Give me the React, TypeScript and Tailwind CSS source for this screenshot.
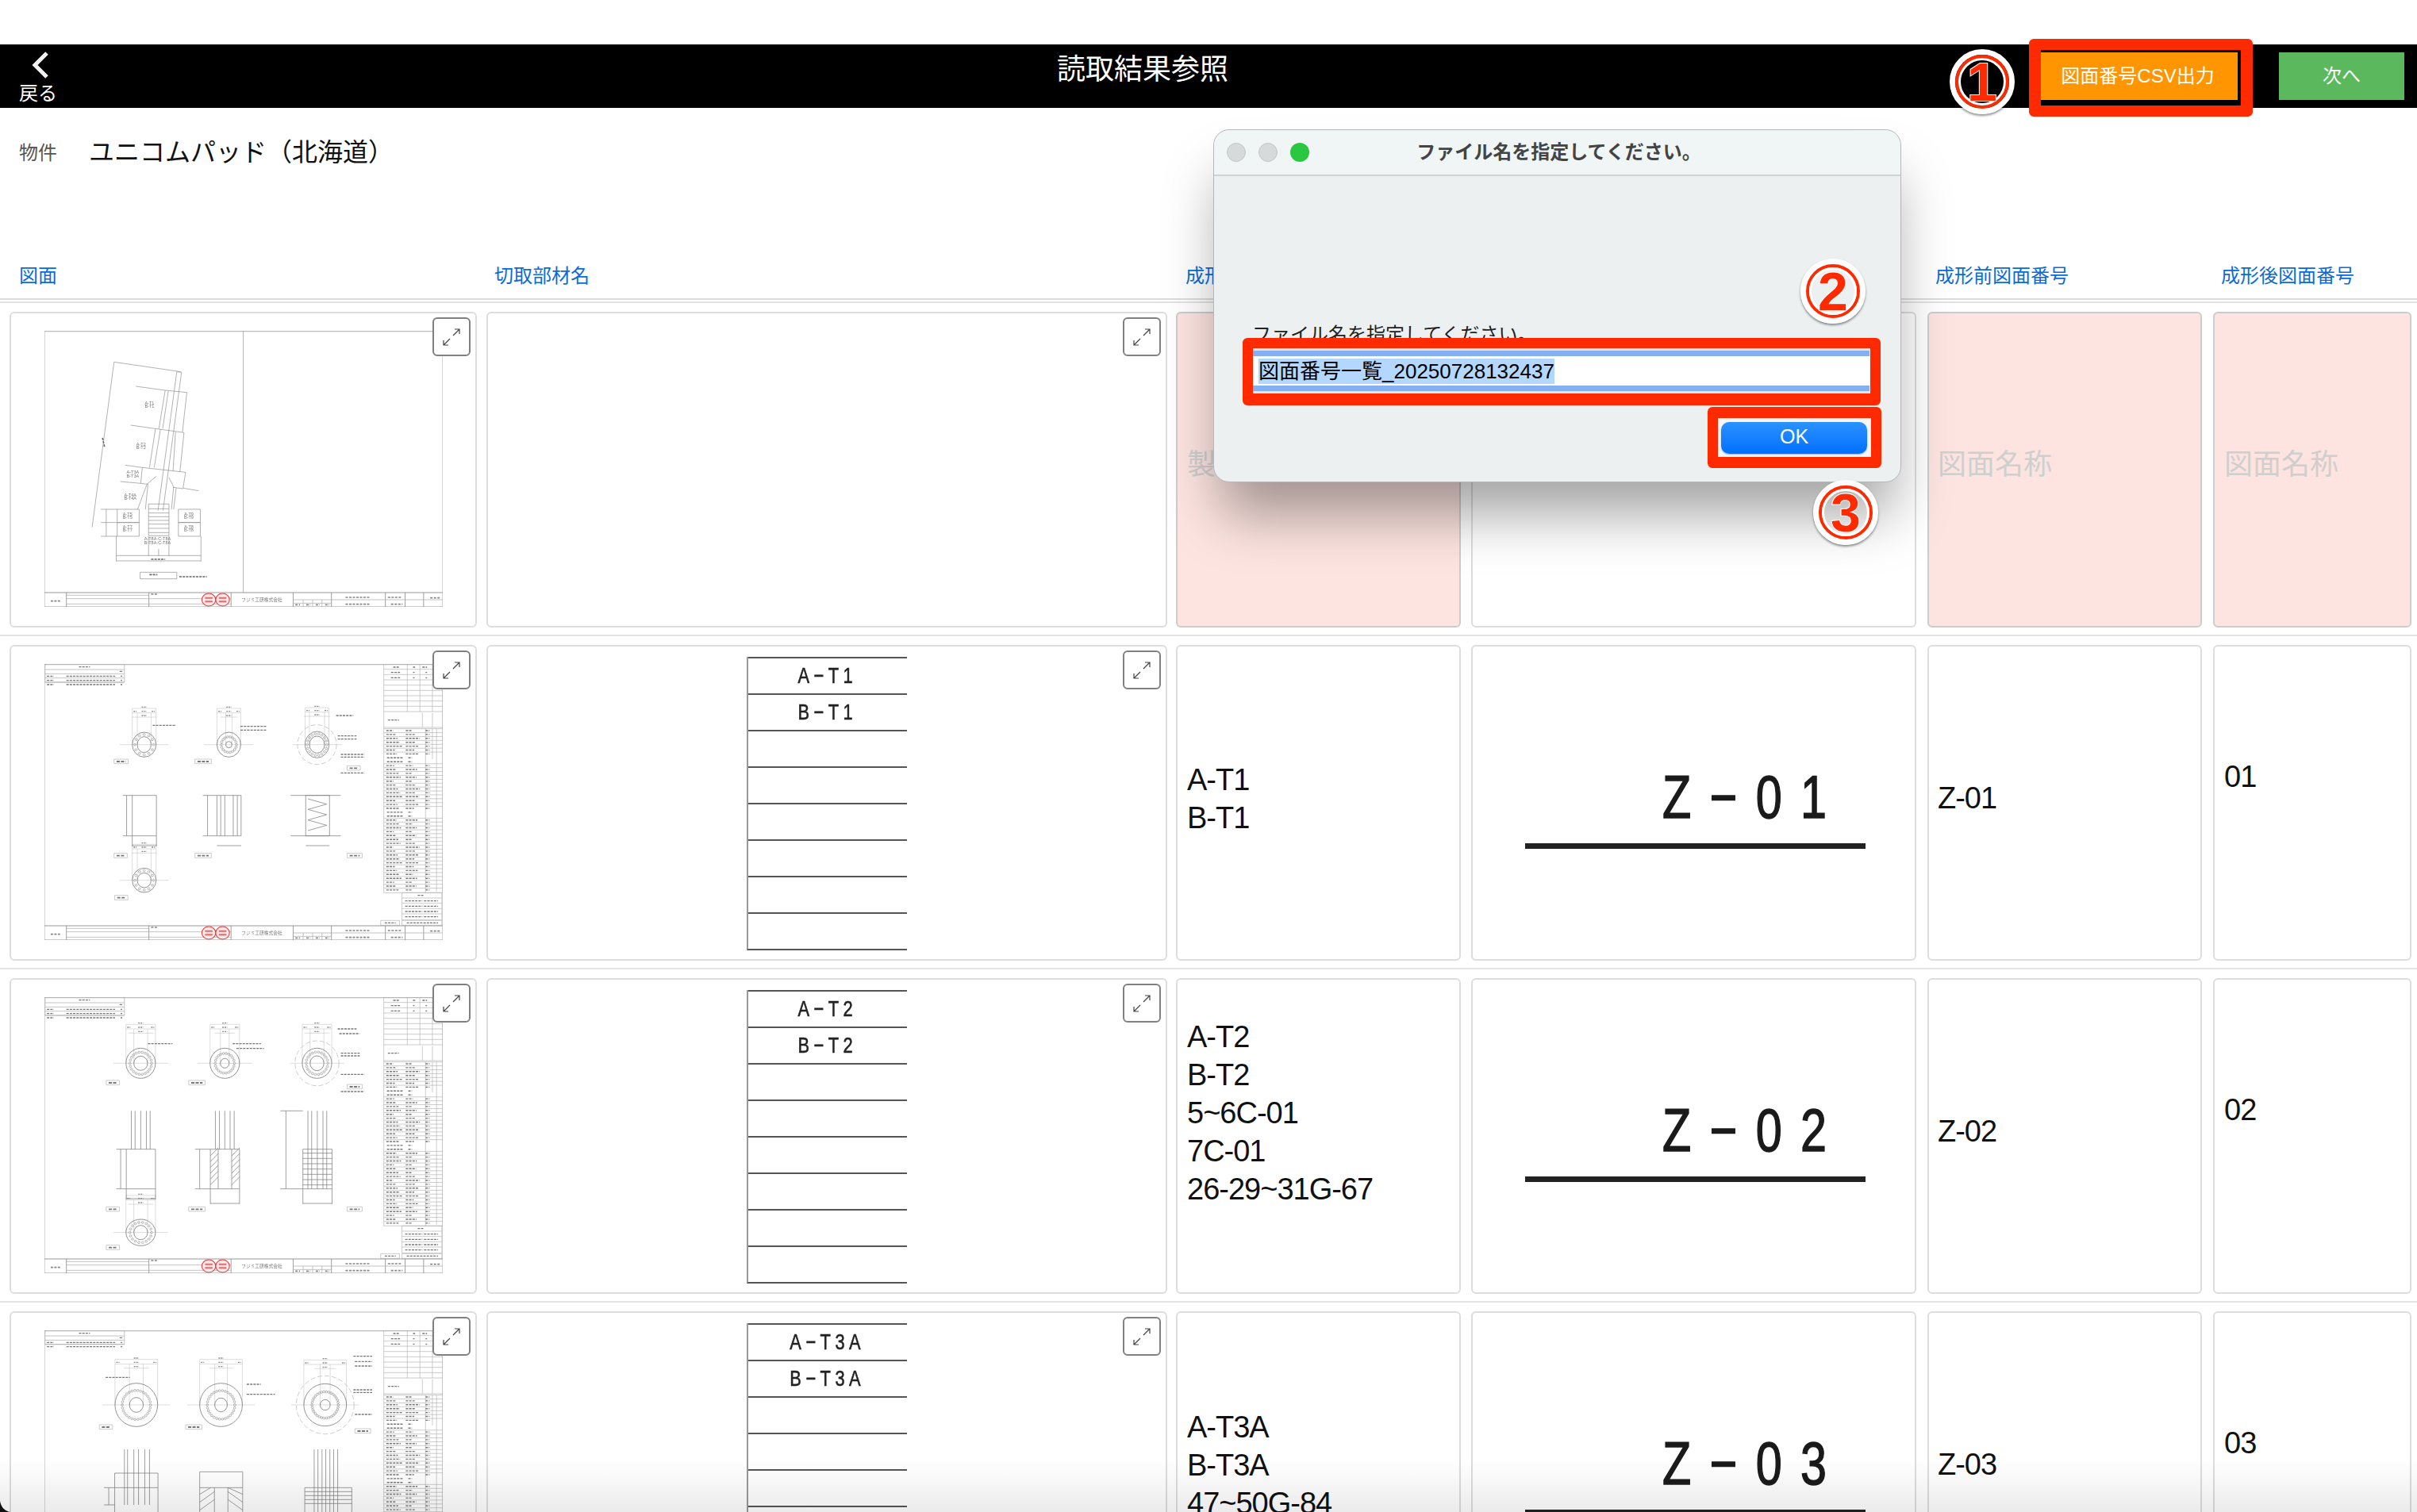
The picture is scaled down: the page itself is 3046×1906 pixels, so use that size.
import React from 'react';

const FONT = "[font-family:'Liberation_Sans','Noto_Sans_CJK_JP',sans-serif]";

// Drawing thumbnails: coordinates are in reference-zoom units, so the viewBox is stretched on purpose
const hLine = (x1: number, x2: number, y: number) => `M${x1} ${y}H${x2}`;
const vLine = (x: number, y1: number, y2: number) => `M${x} ${y1}V${y2}`;
const seg = (x1: number, y1: number, x2: number, y2: number) => `M${x1} ${y1}L${x2} ${y2}`;
const box = (x1: number, y1: number, x2: number, y2: number) => `M${x1} ${y1}H${x2}V${y2}H${x1}Z`;

function TitleBlock() {
  const thin = [
    hLine(70, 333, 1000), hLine(70, 595, 1013), hLine(70, 595, 1033),
    hLine(793, 1270, 1017), hLine(793, 915, 1030),
    vLine(825, 1017, 1044), vLine(855, 1017, 1044), vLine(885, 1017, 1044),
  ].join('');
  const thick = [70, 333, 595, 793, 915, 1087, 1150, 1209].map((x) => vLine(x, 990, 1044)).join('');
  const ink = [
    hLine(20, 50, 1022), hLine(340, 362, 996), hLine(960, 1040, 1008), hLine(960, 1040, 1034),
    hLine(1095, 1140, 1008), hLine(1105, 1142, 1034), hLine(1230, 1262, 1010),
    hLine(800, 815, 1036), hLine(835, 848, 1036), hLine(865, 878, 1036), hLine(895, 908, 1036),
  ].join('');
  return (
    <g>
      <path d={hLine(0, 1270, 990)} stroke="#999" strokeWidth="1.2" />
      <path d={hLine(0, 1270, 1044)} stroke="#999" strokeWidth="1" />
      <path d={thick} stroke="#888" strokeWidth="0.8" />
      <path d={thin} stroke="#aaa" strokeWidth="0.7" />
      <path d={ink} stroke="#888" strokeWidth="1.6" strokeDasharray="3 1.5" />
      <ellipse cx="524" cy="1017" rx="22" ry="24" fill="#fbe9e9" stroke="#e23a3a" strokeWidth="1.1" />
      <ellipse cx="568" cy="1017" rx="22" ry="24" fill="#fbe9e9" stroke="#e23a3a" strokeWidth="1.1" />
      <path d={hLine(512, 536, 1010) + hLine(512, 536, 1024) + hLine(556, 580, 1010) + hLine(556, 580, 1024)} stroke="#e66" strokeWidth="2" />
      <text x="628" y="1023" fontSize="17" fill="#777" textLength="130" lengthAdjust="spacingAndGlyphs" fontFamily="'Noto Sans CJK JP',sans-serif">フジミ工研株式会社</text>
    </g>
  );
}

function SideTable() {
  const grid: string[] = [box(1082, 0, 1270, 865), hLine(1082, 1270, 180), hLine(1082, 1270, 240)];
  const ink: string[] = [];
  for (let i = 1; i < 9; i++) grid.push(hLine(1082, 1270, i * 20));
  [1157, 1197, 1237].forEach((x) => grid.push(vLine(x, 0, 180)));
  grid.push(vLine(1205, 185, 240), vLine(1237, 185, 240));
  ink.push(hLine(1112, 1130, 12), hLine(1175, 1182, 12), hLine(1205, 1220, 12), hLine(1105, 1135, 32), hLine(1105, 1135, 52), hLine(1175, 1180, 32), hLine(1215, 1220, 32), hLine(1175, 1180, 52), hLine(1215, 1220, 52), hLine(1095, 1130, 212));
  let y = 245;
  for (let i = 0; i < 42; i++) {
    const gap = i === 7 || i === 8 || i === 21 || i === 22;
    if (!gap) {
      grid.push(hLine(1082, 1270, y));
      const w = 22 + ((i * 37) % 30);
      ink.push(hLine(1090, 1090 + w, y + 7), hLine(1152, 1152 + 18 + ((i * 13) % 28), y + 7), hLine(1215, 1228, y + 7));
    } else {
      ink.push(hLine(1092, 1142, y + 7), hLine(1160, 1172, y + 7));
    }
    y += 14.7;
  }
  grid.push(vLine(1215, 245, 865), vLine(1237, 245, 360), vLine(1250, 245, 860));
  grid.push(box(1140, 865, 1267, 968), box(1072, 970, 1132, 988), box(1140, 970, 1267, 988));
  [885, 905, 925, 945].forEach((ly) => {
    grid.push(hLine(1140, 1267, ly));
    ink.push(hLine(1150, 1205, ly + 11), hLine(1210, 1255, ly + 11));
  });
  ink.push(hLine(1085, 1120, 979), hLine(1155, 1255, 979), hLine(1190, 1210, 875));
  return (
    <g>
      <path d={grid.join('')} stroke="#aaa" strokeWidth="0.6" />
      <path d={ink.join('')} stroke="#777" strokeWidth="1.4" strokeDasharray="3 1.2" />
    </g>
  );
}

type Ring = { cx: number; cy: number; rx: number; ry: number; irx: number; iry: number; outer?: [number, number]; dots: number };

function PileRing({ r }: { r: Ring }) {
  const dots = [];
  const mx = (r.rx + r.irx) / 2;
  const my = (r.ry + r.iry) / 2;
  for (let i = 0; i < r.dots; i++) {
    const a = (i / r.dots) * Math.PI * 2;
    dots.push(<ellipse key={i} cx={r.cx + Math.cos(a) * mx} cy={r.cy + Math.sin(a) * my} rx="3.5" ry="4" stroke="#888" strokeWidth="0.6" />);
  }
  const top = r.cy - r.ry - 90;
  const d = [
    hLine(r.cx - r.rx, r.cx + r.rx, top), hLine(r.cx - r.rx, r.cx + r.rx, top + 17), hLine(r.cx - r.irx - 18, r.cx + r.irx + 18, top + 33),
    vLine(r.cx - r.rx, top, r.cy), vLine(r.cx + r.rx, top, r.cy), vLine(r.cx - r.irx, top + 17, r.cy), vLine(r.cx + r.irx, top + 17, r.cy),
    hLine(r.cx - r.rx - 40, r.cx + r.rx + 40, r.cy),
  ].join('');
  const ink = [hLine(r.cx - 8, r.cx + 8, top - 5), hLine(r.cx - 8, r.cx + 8, top + 11), hLine(r.cx - 8, r.cx + 8, top + 27), hLine(r.cx - r.rx + 4, r.cx - r.rx + 14, top + 11), hLine(r.cx + r.rx - 14, r.cx + r.rx - 4, top + 11)].join('');
  return (
    <g>
      {r.outer && <ellipse cx={r.cx} cy={r.cy} rx={r.outer[0]} ry={r.outer[1]} stroke="#aaa" strokeWidth="0.6" strokeDasharray="6 3" />}
      <path d={d} stroke="#bbb" strokeWidth="0.5" />
      <path d={ink} stroke="#888" strokeWidth="1.4" strokeDasharray="2 1" />
      <ellipse cx={r.cx} cy={r.cy} rx={r.rx} ry={r.ry} stroke="#777" strokeWidth="0.8" />
      <ellipse cx={r.cx} cy={r.cy} rx={r.irx} ry={r.iry} stroke="#777" strokeWidth="0.8" />
      {dots}
    </g>
  );
}

function Tag({ x, y, w }: { x: number; y: number; w: number }) {
  return (
    <g>
      <rect x={x} y={y} width={w} height="17" stroke="#aaa" strokeWidth="0.6" />
      <path d={hLine(x + 8, x + w - 8, y + 9)} stroke="#777" strokeWidth="1.8" strokeDasharray="4 1.5" />
    </g>
  );
}

function Sheet({ children, rowOne }: { children: React.ReactNode; rowOne?: boolean }) {
  return (
    <svg viewBox="0 0 1270 1044" preserveAspectRatio="none" fill="none" className="h-[348px] w-[502px] blur-[0.3px] [&_*]:[vector-effect:non-scaling-stroke]">
      <path d={hLine(0, 1270, 0)} stroke="#bbb" strokeWidth="2.4" />
      <path d={vLine(0, 0, 1044) + vLine(1270, 0, 1044)} stroke="#aaa" strokeWidth="1" />
      {rowOne && <path d={vLine(634, 0, 990)} stroke="#aaa" strokeWidth="0.9" />}
      {children}
      <TitleBlock />
    </svg>
  );
}

function Legend({ rows }: { rows: number }) {
  const h = 21 + rows * 16;
  const lines = [box(2, 0, 255, h), hLine(2, 255, 21)];
  const ink = [hLine(110, 145, 11), hLine(240, 250, 28)];
  for (let i = 0; i < rows; i++) {
    lines.push(hLine(2, 255, 37 + i * 16));
    ink.push(hLine(8, 30, 46 + i * 16), hLine(70, 225, 46 + i * 16), hLine(243, 248, 46 + i * 16));
  }
  return (
    <g>
      <path d={lines.join('')} stroke="#aaa" strokeWidth="0.7" />
      <path d={ink.join('')} stroke="#777" strokeWidth="1.4" strokeDasharray="3 1.2" />
    </g>
  );
}

function ElevationDrawing() {
  const body = [
    seg(222, 118, 435, 155), seg(222, 118, 152, 743), seg(292, 210, 385, 225), seg(275, 357, 354, 370), seg(257, 508, 312, 517), seg(242, 570, 307, 577), seg(442, 595, 492, 605),
    seg(422, 155, 437, 157), seg(422, 155, 362, 680), seg(437, 157, 378, 680),
    seg(385, 225, 454, 233), seg(385, 225, 365, 370), seg(454, 233, 440, 383), seg(395, 227, 377, 370),
    seg(354, 370, 445, 385), seg(354, 370, 335, 517), seg(445, 385, 432, 533), seg(370, 372, 350, 517), seg(418, 382, 410, 530),
    seg(312, 517, 450, 535), seg(312, 517, 307, 577), seg(450, 535, 442, 595),
    seg(357, 550, 327, 580), seg(327, 580, 297, 675), seg(397, 555, 412, 590), seg(412, 590, 405, 675),
    seg(307, 577, 330, 580), seg(410, 592, 442, 597), seg(420, 595, 412, 675), seg(330, 580, 322, 675),
    box(232, 675, 302, 725), box(232, 725, 302, 777), box(427, 675, 497, 725), box(427, 725, 497, 777),
    box(332, 655, 397, 775),
    hLine(332, 397, 673), hLine(332, 397, 689), hLine(332, 397, 703), hLine(332, 397, 717), hLine(332, 397, 731), hLine(332, 397, 747), hLine(332, 397, 763),
    hLine(180, 232, 675), hLine(180, 232, 725), hLine(180, 232, 777), vLine(197, 675, 777),
    hLine(229, 499, 850), hLine(229, 499, 870), vLine(229, 777, 872), vLine(499, 777, 872), vLine(332, 777, 852), vLine(397, 777, 852), vLine(364, 825, 852),
    box(305, 913, 422, 938),
  ].join('');
  const ink = [seg(185, 405, 192, 440), hLine(335, 360, 922), hLine(430, 518, 930), hLine(340, 385, 864)].join('');
  const labels: [string, number, number][] = [
    ['A-T1', 320, 278], ['B-T1', 320, 290], ['A-T2', 293, 434], ['B-T2', 293, 447], ['A-T3A', 262, 541], ['B-T3A', 262, 554],
    ['A-T4A', 254, 628], ['B-T4A', 254, 640], ['A-T5', 250, 698], ['B-T5', 250, 710], ['A-T9', 445, 698], ['B-T9', 445, 710],
    ['A-T7', 250, 748], ['B-T7', 250, 760], ['A-T8', 445, 748], ['B-T8', 445, 760], ['A-T8A·C-T8A', 318, 793], ['B-T8A·C-T8A', 318, 806],
  ];
  return (
    <Sheet rowOne>
      <path d={body} stroke="#888" strokeWidth="0.65" />
      <path d={ink} stroke="#666" strokeWidth="1.6" strokeDasharray="3 1.2" />
      {labels.map(([t, x, y]) => (
        <text key={t} x={x} y={y} fontSize="14" fill="#777" fontFamily="'Liberation Sans',sans-serif">{t}</text>
      ))}
    </Sheet>
  );
}

function hatch(x1: number, x2: number, y1: number, y2: number, step: number) {
  const out: string[] = [];
  for (let y = y1; y < y2 - 20; y += step) out.push(seg(x1, y + 30, x2, y));
  return out.join('');
}

function PileDrawing({ variant }: { variant: 1 | 2 | 3 }) {
  const rings: Ring[] =
    variant === 1
      ? [
          { cx: 318, cy: 305, rx: 38, ry: 47, irx: 22, iry: 30, dots: 12 },
          { cx: 588, cy: 305, rx: 38, ry: 47, irx: 10, iry: 12, dots: 18 },
          { cx: 869, cy: 305, rx: 38, ry: 50, irx: 24, iry: 32, outer: [62, 75], dots: 18 },
          { cx: 318, cy: 818, rx: 38, ry: 46, irx: 22, iry: 28, dots: 12 },
        ]
      : variant === 2
        ? [
            { cx: 307, cy: 250, rx: 47, ry: 57, irx: 22, iry: 27, dots: 22 },
            { cx: 575, cy: 250, rx: 47, ry: 57, irx: 14, iry: 18, dots: 22 },
            { cx: 869, cy: 250, rx: 47, ry: 57, irx: 22, iry: 28, outer: [70, 85], dots: 22 },
            { cx: 307, cy: 890, rx: 47, ry: 50, irx: 22, iry: 27, dots: 18 },
          ]
        : [
            { cx: 293, cy: 282, rx: 68, ry: 82, irx: 22, iry: 28, dots: 30 },
            { cx: 563, cy: 282, rx: 68, ry: 82, irx: 20, iry: 26, dots: 30 },
            { cx: 895, cy: 282, rx: 68, ry: 80, irx: 16, iry: 20, outer: [92, 110], dots: 34 },
          ];
  const bodies =
    variant === 1
      ? [
          box(280, 497, 357, 650), box(550, 497, 627, 650), vLine(562, 497, 650), vLine(575, 497, 650), vLine(602, 497, 650), vLine(615, 497, 650),
          box(833, 497, 909, 650), hLine(785, 945, 497), hLine(785, 945, 650),
          hLine(250, 280, 497), hLine(250, 280, 650), vLine(262, 497, 650), hLine(280, 357, 687), vLine(280, 650, 690), vLine(357, 650, 690),
          hLine(505, 550, 497), hLine(505, 550, 650), vLine(520, 497, 650), hLine(550, 627, 687),
          hLine(833, 909, 687),
          seg(840, 510, 900, 530), seg(900, 530, 840, 550), seg(840, 550, 900, 570), seg(900, 570, 840, 590), seg(840, 590, 900, 610), seg(900, 610, 840, 630),
        ]
      : variant === 2
        ? [
            box(261, 575, 354, 725), box(529, 575, 622, 725), vLine(554, 575, 725), vLine(597, 575, 725),
            box(824, 575, 917, 725), hLine(229, 261, 575), hLine(229, 261, 725), vLine(243, 575, 725),
            hLine(480, 529, 575), hLine(480, 529, 725), vLine(495, 575, 725), hLine(261, 354, 762), vLine(261, 725, 765), vLine(354, 725, 765),
            hLine(529, 622, 780), vLine(529, 725, 782), vLine(622, 725, 782), hLine(824, 917, 780), vLine(824, 725, 782), vLine(917, 725, 782),
            ...[277, 289, 307, 325, 337].map((x) => vLine(x, 430, 575)), ...[545, 558, 575, 592, 605].map((x) => vLine(x, 430, 575)),
            ...[840, 852, 870, 888, 900].map((x) => vLine(x, 430, 725)),
            ...[590, 610, 630, 650, 670, 690, 710].map((y) => hLine(824, 917, y)), hLine(752, 824, 430), vLine(770, 430, 725), hLine(752, 824, 725),
            hatch(529, 554, 570, 720, 22), hatch(597, 622, 570, 720, 22),
          ]
        : [
            box(224, 595, 362, 700), box(495, 595, 632, 700), vLine(542, 595, 700), vLine(585, 595, 700), box(830, 595, 980, 700),
            hLine(190, 224, 595), hLine(190, 224, 660), vLine(205, 595, 660),
            ...[255, 265, 285, 300, 320, 335].map((x) => vLine(x, 450, 660)), ...[860, 872, 885, 897, 910, 922, 935].map((x) => vLine(x, 450, 700)),
            hLine(224, 362, 540), vLine(224, 540, 595), vLine(362, 540, 595), hLine(495, 632, 535), vLine(495, 535, 595), vLine(632, 535, 595),
            ...[610, 625, 640, 655].map((y) => hLine(830, 980, y)),
            seg(495, 620, 530, 595), seg(495, 650, 542, 610), seg(495, 680, 542, 640), seg(585, 610, 632, 650), seg(585, 640, 632, 680), seg(585, 595, 632, 620),
          ];
  const tags: [number, number, number][] =
    variant === 1
      ? [[222, 360, 45], [480, 360, 52], [965, 385, 42], [222, 716, 42], [480, 716, 52], [965, 716, 48], [224, 875, 42]]
      : variant === 2
        ? [[197, 315, 42], [460, 315, 52], [965, 330, 48], [197, 793, 42], [460, 793, 52], [965, 793, 48], [197, 938, 42]]
        : [[175, 357, 42], [450, 357, 52], [990, 372, 50]];
  const notes =
    variant === 1
      ? [hLine(345, 420, 232), hLine(625, 710, 236), hLine(625, 710, 250), hLine(930, 985, 195), hLine(935, 995, 272), hLine(935, 995, 284), hLine(945, 1020, 342), hLine(945, 1020, 352), hLine(945, 1020, 412)]
      : variant === 2
        ? [hLine(330, 408, 176), hLine(600, 690, 176), hLine(612, 700, 194), hLine(935, 995, 120), hLine(940, 1005, 138), hLine(945, 1005, 212), hLine(945, 1005, 222), hLine(945, 1020, 357), hLine(945, 1020, 292)]
        : [hLine(195, 272, 178), hLine(645, 690, 204), hLine(645, 735, 242), hLine(985, 1045, 98), hLine(990, 1045, 118), hLine(990, 1045, 135), hLine(985, 1045, 225), hLine(985, 1045, 235), hLine(990, 1045, 318)];
  const legendRows = variant === 3 ? 2 : 3;
  return (
    <Sheet>
      <Legend rows={legendRows} />
      <SideTable />
      {rings.map((r) => (
        <PileRing key={r.cx + '-' + r.cy} r={r} />
      ))}
      <path d={bodies.join('')} stroke="#777" strokeWidth="0.7" />
      <path d={notes.join('')} stroke="#777" strokeWidth="1.4" strokeDasharray="3 1.2" />
      {tags.map(([x, y, w]) => (
        <Tag key={x + '-' + y} x={x} y={y} w={w} />
      ))}
    </Sheet>
  );
}

function ExpandButton() {
  return (
    <button className="absolute right-[6px] top-[5px] flex h-[49px] w-[48px] items-center justify-center rounded-[6px] border-2 border-[#808080] bg-white">
      <svg width="24" height="24" viewBox="0 0 24 24" fill="none" stroke="#444" strokeWidth="1.2">
        <path d="M14 10 22 2M16 2h6v6M10 14 2 22M2 16v6h6" />
      </svg>
    </button>
  );
}

function PartsTable({ labels }: { labels: string[] }) {
  const rows = [...labels, ...Array(8 - labels.length).fill('')];
  return (
    <div className="ml-[326px] mt-[13px] w-[202px] border-b-2 border-l-2 border-b-[#555] border-l-[#999]">
      {rows.map((label, i) => (
        <div key={i} className="flex h-[46px] items-center justify-center border-t-2 border-[#555] text-[28px] leading-none tracking-[7px] text-[#222]">
          {label && <span className="inline-block scale-x-[0.78] [-webkit-text-stroke:0.6px_#222]">{label}</span>}
        </div>
      ))}
    </div>
  );
}

function DrawingNumber({ text }: { text: string }) {
  return (
    <div className="ml-[66px] mt-[152px] w-[429px]">
      <div className="ml-[173px] h-[76px] origin-left scale-x-[0.78] whitespace-nowrap text-[76px] leading-[76px] tracking-[30px] text-[#1a1a1a] [-webkit-text-stroke:1.5px_#1a1a1a]">{text}</div>
      <div className="mt-[20px] h-[7px] bg-[#222]" />
    </div>
  );
}

const CELL = 'relative h-[398px] rounded-[6px] border-2 border-[#dddddd] bg-white overflow-hidden';
const PINK = 'relative h-[398px] rounded-[6px] border-2 border-[#cccccc] bg-[#fde4e0] overflow-hidden';
const BODY = 'text-[38px] leading-[48px] tracking-[-1px] text-[#111]';
const HOLDER = 'text-[36px] leading-[48px] text-[#cfcfcf]';
const HEAD = 'text-[24px] leading-[30px] text-[#0a6cd6]';

const ROWS = [
  { drawing: <ElevationDrawing />, parts: [] as string[], names: [], pt: 'pt-[144px]', z: '', code: '', no: '' },
  { drawing: <PileDrawing variant={1} />, parts: ['A−T1', 'B−T1'], names: ['A-T1', 'B-T1'], pt: 'pt-[144px]', z: 'Z−01', code: 'Z-01', no: '01' },
  { drawing: <PileDrawing variant={2} />, parts: ['A−T2', 'B−T2'], names: ['A-T2', 'B-T2', '5~6C-01', '7C-01', '26-29~31G-67'], pt: 'pt-[48px]', z: 'Z−02', code: 'Z-02', no: '02' },
  { drawing: <PileDrawing variant={3} />, parts: ['A−T3A', 'B−T3A'], names: ['A-T3A', 'B-T3A', '47~50G-84'], pt: 'pt-[120px]', z: 'Z−03', code: 'Z-03', no: '03' },
];

function Row({ row, first }: { row: (typeof ROWS)[number]; first: boolean }) {
  return (
    <div className="h-[420px] border-t-2 border-[#e2e2e2] pl-[12px] pt-[11px]">
      <div className="grid grid-cols-[601px_869px_372px_575px_360px_250px]">
        <div className={`${CELL} w-[589px] pl-[42px] pt-[22px]`}>
          {row.drawing}
          <ExpandButton />
        </div>
        <div className={`${CELL} w-[858px]`}>
          {row.parts.length > 0 && <PartsTable labels={row.parts} />}
          <ExpandButton />
        </div>
        {first ? (
          <div className={`${PINK} w-[359px] pl-[12px] pt-[167px] ${HOLDER}`}>製品名</div>
        ) : (
          <div className={`${CELL} w-[359px] pl-[12px] ${row.pt} ${BODY}`}>
            {row.names.map((n: string) => (
              <div key={n}>{n}</div>
            ))}
          </div>
        )}
        <div className={`${CELL} w-[561px]`}>{row.z && <DrawingNumber text={row.z} />}</div>
        {first ? (
          <div className={`${PINK} w-[346px] pl-[11px] pt-[167px] ${HOLDER}`}>図面名称</div>
        ) : (
          <div className={`${CELL} w-[346px] pl-[11px] pt-[167px] ${BODY}`}>{row.code}</div>
        )}
        {first ? (
          <div className={`${PINK} w-[250px] pl-[12px] pt-[167px] ${HOLDER}`}>図面名称</div>
        ) : (
          <div className={`${CELL} w-[250px] pl-[12px] pt-[140px] ${BODY}`}>{row.no}</div>
        )}
      </div>
    </div>
  );
}

function Badge({ n, className }: { n: string; className: string }) {
  return (
    <div className={`absolute flex h-[82px] w-[82px] items-center justify-center rounded-full border-[7px] border-white shadow-[0_2px_3px_rgba(0,0,0,0.45)] ${className}`}>
      <div className="flex h-full w-full items-center justify-center rounded-full border-[4px] border-[#ff2a00]">
        <div className="flex h-full w-full items-center justify-center rounded-full border-[3px] border-white">
          <span className="text-[68px] font-bold leading-none text-[#ff2a00] [-webkit-text-stroke:2px_white] [paint-order:stroke_fill]">{n}</span>
        </div>
      </div>
    </div>
  );
}

function FileDialog() {
  return (
    <div className="absolute left-[1529px] top-[163px] flex h-[445px] w-[867px] flex-col rounded-[20px] border border-[#b5b8b8] bg-[#ecf0f1] shadow-[0_50px_70px_-10px_rgba(0,0,0,0.36)]">
      <div className="relative flex h-[58px] items-center justify-center rounded-t-[20px] border-b-2 border-[#d0d3d3] bg-[#f0f5f5] pl-[4px] text-[24px] font-semibold text-[#444]">
        <div className="absolute left-[16px] top-[16px] flex gap-[16px]">
          <span className="h-[24px] w-[24px] rounded-full border border-[#c3c7c7] bg-[#d6dadb]" />
          <span className="h-[24px] w-[24px] rounded-full border border-[#c3c7c7] bg-[#d6dadb]" />
          <span className="h-[24px] w-[24px] rounded-full bg-[#2ac840]" />
        </div>
        ファイル名を指定してください。
      </div>
      <div className="ml-[48px] mt-[185px] text-[24px] leading-[30px] text-[#222]">ファイル名を指定してください。</div>
      <div className="ml-[49px] mt-[2px] h-[57px] w-[777px] bg-[#e6e6e6] py-[3px]">
        <div className="flex h-[51px] items-center border-y-[7px] border-[#84aff0] bg-white pl-[7px]">
          <span className="h-[32px] bg-[#b3d7ff] text-[26px] leading-[32px] text-black">図面番号一覧_20250728132437</span>
        </div>
      </div>
      <div className="ml-[635px] mt-[32px] flex h-[48px] w-[192px] items-center justify-center bg-[#f6f7f7]">
        <button className="h-[40px] w-[184px] rounded-[10px] bg-gradient-to-b from-[#2a92ff] to-[#006fff] pb-[4px] text-[25px] leading-[32px] text-white shadow-[0_1px_2px_rgba(0,60,160,0.4)]">OK</button>
      </div>
    </div>
  );
}

export default function App() {
  return (
    <div className={`relative h-[1906px] w-[3046px] overflow-hidden bg-white ${FONT}`}>
      <div className="h-[56px]" />
      <header className="flex h-[80px] items-center bg-black text-white">
        <div className="flex h-full w-[1332px] flex-col pl-[24px] pt-[8px]">
          <svg width="48" height="36" viewBox="0 0 48 36" fill="none" stroke="#f2f2f2" strokeWidth="5">
            <path d="M35 3 20 18 35 33" />
          </svg>
          <div className="mt-[3px] text-[24px] leading-[30px]">戻る</div>
        </div>
        <h1 className="mb-[16px] text-[36px] font-normal leading-[44px]">読取結果参照</h1>
        <div className="flex-1" />
        <button className="h-[60px] w-[248px] bg-[#ff9500] pr-[4px] text-[24px] text-white">図面番号CSV出力</button>
        <button className="ml-[52px] mr-[16px] h-[60px] w-[158px] bg-[#5cb85c] text-[24px] text-white">次へ</button>
      </header>

      <div className="flex h-[114px] items-center pl-[24px]">
        <div className="w-[88px] text-[24px] text-[#555]">物件</div>
        <div className="pb-[3px] text-[32px] text-[#111]">ユニコムパッド（北海道）</div>
      </div>

      <div className="grid h-[128px] grid-cols-[601px_869px_372px_575px_360px_250px] items-end border-b-2 border-[#dcdcdc] pb-[13px] pl-[12px]">
        <div className={`${HEAD} pl-[12px]`}>図面</div>
        <div className={`${HEAD} pl-[10px]`}>切取部材名</div>
        <div className={`${HEAD} pl-[12px]`}>成形部材名</div>
        <div className={`${HEAD} pl-[10px]`}>切取図面番号</div>
        <div className={`${HEAD} pl-[10px]`}>成形前図面番号</div>
        <div className={`${HEAD} pl-[10px]`}>成形後図面番号</div>
      </div>

      <div className="mt-[2px]">
        {ROWS.map((row, i) => (
          <Row key={i} row={row} first={i === 0} />
        ))}
      </div>

      {/* bottom edge of the window */}
      <div className="absolute bottom-0 left-0 h-[66px] w-full bg-gradient-to-b from-transparent to-black/[0.08]" />
      <svg className="absolute bottom-0 left-0" width="12" height="14" viewBox="0 0 12 14">
        <path d="M0 0C1 7 5 12 12 14H0Z" fill="#111" />
      </svg>

      <FileDialog />

      {/* annotations */}
      <div className="absolute left-[2557px] top-[49px] h-[98px] w-[282px] rounded-[6px] border-x-[15px] border-y-[14px] border-[#ff2a00]" />
      <div className="absolute left-[1566px] top-[426px] h-[85px] w-[804px] rounded-[6px] border-x-[13px] border-y-[13px] border-b-[15px] border-[#ff2a00]" />
      <div className="absolute left-[2152px] top-[513px] h-[77px] w-[219px] rounded-[6px] border-x-[13px] border-b-[14px] border-t-[14px] border-[#ff2a00]" />
      <Badge n="1" className="left-[2457px] top-[62px]" />
      <Badge n="2" className="left-[2269px] top-[326px]" />
      <Badge n="3" className="left-[2285px] top-[605px]" />
    </div>
  );
}
